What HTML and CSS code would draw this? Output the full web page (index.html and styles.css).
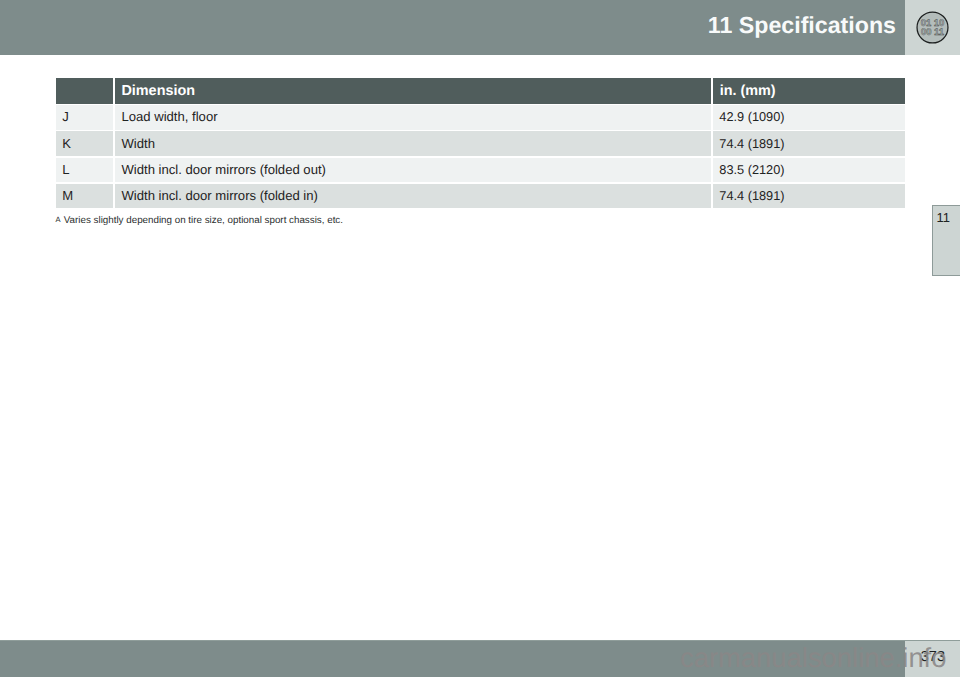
FILE: index.html
```html
<!DOCTYPE html>
<html lang="en">
<head>
<meta charset="utf-8">
<title>11 Specifications</title>
<link rel="stylesheet" href="styles.css">
</head>
<body>
<div class="page">
  <header class="top">
    <div class="top-bar"><h1>11 Specifications</h1></div>
    <div class="top-corner">
      <svg class="badge" viewBox="0 0 32 32" width="33" height="33" aria-hidden="true">
        <circle cx="16" cy="16" r="15" fill="#b4bdbb" stroke="#1c1f1f" stroke-width="1.2"/>
        <text x="16" y="15" class="badge-text">01 10</text>
        <text x="16" y="23.4" class="badge-text">00 11</text>
      </svg>
    </div>
  </header>
  <main class="middle">
    <section class="content">
      <div class="spec">
        <div class="cell head"></div><div class="cell head">Dimension</div><div class="cell head">in. (mm)</div>
        <div class="cell light">J</div><div class="cell light">Load width, floor</div><div class="cell light num">42.9 (1090)</div>
        <div class="cell dark">K</div><div class="cell dark">Width</div><div class="cell dark num">74.4 (1891)</div>
        <div class="cell light">L</div><div class="cell light">Width incl. door mirrors (folded out)</div><div class="cell light num">83.5 (2120)</div>
        <div class="cell dark">M</div><div class="cell dark">Width incl. door mirrors (folded in)</div><div class="cell dark num">74.4 (1891)</div>
      </div>
      <p class="note"><span class="mark">A</span>Varies slightly depending on tire size, optional sport chassis, etc.</p>
    </section>
    <aside class="tab">11</aside>
  </main>
  <footer class="bottom">
    <div class="bottom-bar"></div>
    <div class="bottom-corner">373</div>
    <span class="watermark">carmanualsonline.info</span>
  </footer>
</div>
</body>
</html>
```
FILE: styles.css
```css
* { box-sizing: border-box; }
html, body { margin: 0; padding: 0; background: #fff; }
body { font-family: "Liberation Sans", Arial, sans-serif; color: #1f2323; text-rendering: geometricPrecision; }
.page { width: 960px; height: 677px; display: flex; flex-direction: column; overflow: hidden; }

.top { height: 55px; display: flex; flex: none; }
.top-bar { flex: 1; background: #7e8c8b; display: flex; align-items: center; justify-content: flex-end; padding: 0 9px 3px 0; }
.top-bar h1 { margin: 0; font-size: 23.2px; font-weight: 700; color: #f8fafa; line-height: 1; }
.top-corner { width: 55px; background: #cdd5d3; display: flex; align-items: center; justify-content: center; padding: 0 0 1px 0; }
.badge { display: block; }
.badge-text { font-family: "Liberation Sans", Arial, sans-serif; font-size: 9.2px; font-weight: 700; fill: #b4bdbb; stroke: #3c4242; stroke-width: 0.4px; text-anchor: middle; }

.middle { flex: 1; display: flex; align-items: flex-start; min-height: 0; }
.content { width: 850px; margin: 23px 0 0 55.5px; flex: none; }
.spec { display: grid; grid-template-columns: 57.5px 596.5px 192px; grid-auto-rows: 24.7px; grid-template-rows: 25.5px; gap: 1.55px 1.75px; }
.cell { font-size: 13.1px; display: flex; align-items: center; padding: 0 0 1px 6.7px; }
.head { background: #505d5c; color: #fff; font-weight: 700; font-size: 14.4px; padding-bottom: 0; }
.num { font-size: 12.75px; padding-left: 6.3px; }
.light { background: #eff2f2; }
.dark { background: #dbe0df; }
.note { margin: 7px 0 0; font-size: 9.8px; line-height: 11px; color: #2a2e2e; display: flex; }
.mark { font-size: 7.5px; width: 8.3px; flex: none; line-height: 9px; }

.tab { width: 28.5px; height: 71px; margin: 150px 0 0 26px; flex: none; background: #cdd5d3; border: solid #8e9b99; border-width: 1px 0 1.5px 1px; font-size: 13px; font-weight: 400; color: #1f2323; padding: 6px 0 0 3.9px; line-height: 12px; }

.bottom { height: 37px; display: flex; flex: none; position: relative; border-top: 1px solid #8f9d9a; }
.bottom-bar { flex: 1; background: #7e8c8b; }
.bottom-corner { width: 55px; background: #cdd5d3; font-size: 14.5px; display: flex; align-items: flex-start; justify-content: flex-end; padding: 9px 15px 0 0; color: #1c1f1f; line-height: 14px; }
.watermark { position: absolute; left: 680px; top: 2px; font-size: 27.4px; line-height: 30px; color: rgba(138, 135, 135, 0.9); white-space: nowrap; }
```
